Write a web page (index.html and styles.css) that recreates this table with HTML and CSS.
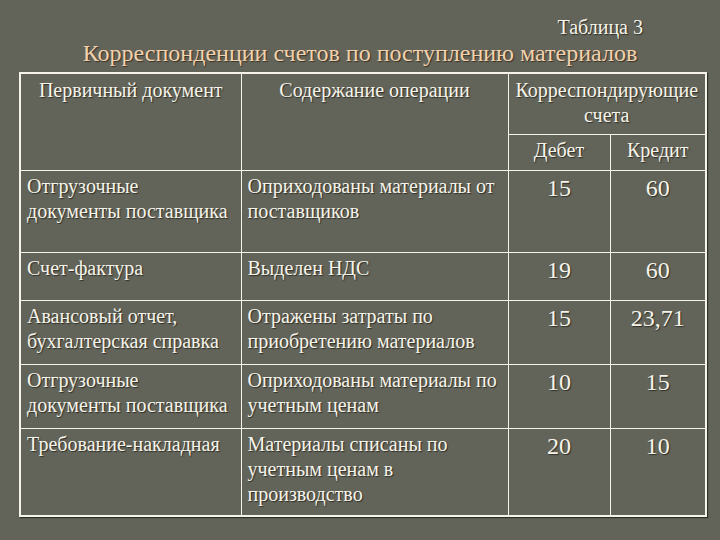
FILE: index.html
```html
<!DOCTYPE html>
<html>
<head>
<meta charset="utf-8">
<title>Таблица 3</title>
<link rel="stylesheet" href="styles.css">
</head>
<body>
<div class="slide">
  <div class="tab-label">Таблица 3</div>
  <h1 class="title">Корреспонденции счетов по поступлению материалов</h1>
  <table class="grid">
    <colgroup>
      <col class="c1"><col class="c2"><col class="c3"><col class="c4">
    </colgroup>
    <tr class="h1">
      <th rowspan="2">Первичный документ</th>
      <th rowspan="2">Содержание операции</th>
      <th colspan="2">Корреспондирующие счета</th>
    </tr>
    <tr class="h2">
      <th>Дебет</th>
      <th>Кредит</th>
    </tr>
    <tr class="r1">
      <td>Отгрузочные документы поставщика</td>
      <td>Оприходованы материалы от поставщиков</td>
      <td class="num">15</td>
      <td class="num">60</td>
    </tr>
    <tr class="r2">
      <td>Счет-фактура</td>
      <td>Выделен НДС</td>
      <td class="num">19</td>
      <td class="num">60</td>
    </tr>
    <tr class="r3">
      <td>Авансовый отчет, бухгалтерская справка</td>
      <td>Отражены затраты по приобретению материалов</td>
      <td class="num">15</td>
      <td class="num">23,71</td>
    </tr>
    <tr class="r4">
      <td>Отгрузочные документы поставщика</td>
      <td>Оприходованы материалы по учетным ценам</td>
      <td class="num">10</td>
      <td class="num">15</td>
    </tr>
    <tr class="r5">
      <td>Требование-накладная</td>
      <td>Материалы списаны по учетным ценам в производство</td>
      <td class="num">20</td>
      <td class="num">10</td>
    </tr>
  </table>
</div>
</body>
</html>
```
FILE: styles.css
```css
html, body {
  margin: 0;
  padding: 0;
}
body {
  width: 720px;
  height: 540px;
  overflow: hidden;
  background: #62645a;
  font-family: "Liberation Serif", serif;
  color: #f6f4ea;
}
.slide {
  padding-top: 15px;
}
.tab-label {
  text-align: right;
  padding-right: 77px;
  font-size: 20px;
  line-height: 24px;
  text-shadow: 1px 1px 1px #2e2f28;
}
.title {
  margin: 0;
  text-align: center;
  font-weight: normal;
  font-size: 24px;
  line-height: 28px;
  color: #f2d2ae;
  text-shadow: 1px 1px 1px #3a3226;
  height: 33px;
}
.grid {
  margin-left: 19px;
  width: 686px;
  border-collapse: collapse;
  border: 2px solid #f6f4ea;
  table-layout: fixed;
  box-shadow: 1px 1px 1px #2e2f28;
}
.c1 { width: 221px; }
.c2 { width: 267px; }
.c3 { width: 102px; }
.c4 { width: 96px; }
.grid th, .grid td {
  border: 1px solid #f6f4ea;
  vertical-align: top;
  font-size: 20px;
  line-height: 25px;
  text-shadow: 1px 1px 1px #2e2f28;
  font-weight: normal;
  padding: 3px 8px 0 6px;
}
.grid th {
  text-align: center;
  padding: 4px 2px 0 2px;
}
.grid td.num {
  text-align: center;
  font-size: 24px;
  line-height: 26px;
  padding: 4px 2px 0 2px;
}
.h1 { height: 61px; }
.h2 { height: 36px; }
.h2 th { padding-top: 3px; }
.r1 { height: 82px; }
.r2 { height: 48px; }
.r3 { height: 64px; }
.r4 { height: 64px; }
.r5 { height: 88px; }
```
